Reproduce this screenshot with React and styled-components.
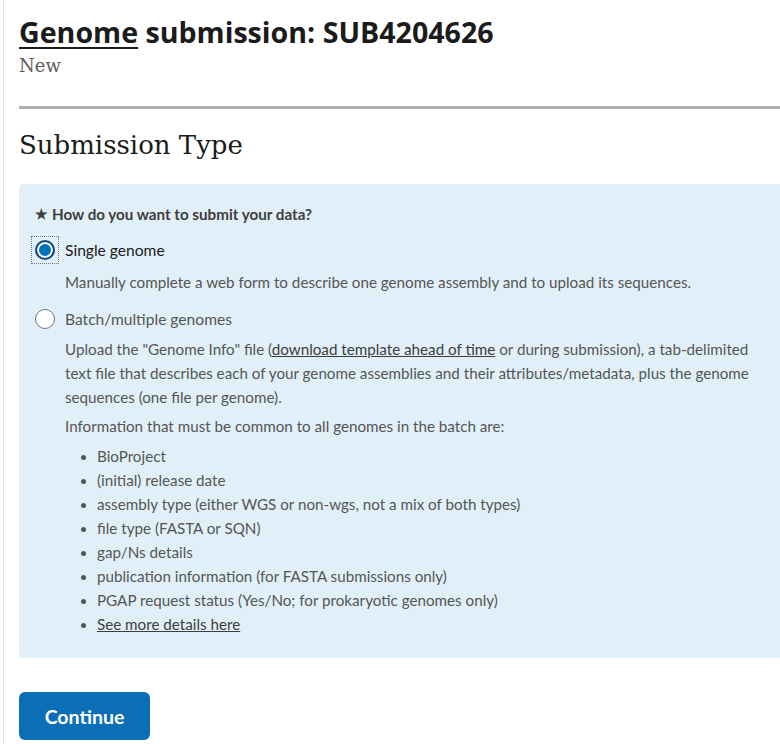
import React, { useState } from "react";
import styled, { createGlobalStyle } from "styled-components";

const GlobalStyle = createGlobalStyle`
  html, body {
    margin: 0;
    padding: 0;
    background: #ffffff;
  }
  body {
    font-family: "Lato", "Noto Sans", sans-serif;
    color: #1b1b1b;
    overflow: hidden;
  }
`;

const Page = styled.div`
  margin-left: 3px;
  border-left: 1px solid #e4e4e4;
  padding: 14px 0 4px 15px;
  min-height: 726px;
`;

const Title = styled.h1`
  margin: 0;
  font-family: "Open Sans", "Liberation Sans", sans-serif;
  font-size: 28.6px;
  font-weight: 700;
  line-height: 36px;
  color: #1b1b1b;
`;

const TitleLink = styled.a`
  color: inherit;
  text-decoration: underline;
  text-underline-offset: 4px;
  text-decoration-thickness: 2px;
`;

const Status = styled.div`
  font-family: "DejaVu Serif", "Liberation Serif", serif;
  font-size: 18px;
  color: #5c5c5c;
  line-height: 24px;
  margin-top: 4px;
`;

const Rule = styled.hr`
  margin: 28px 0 0;
  border: 0;
  height: 3px;
  background: #aeaeae;
`;

const SectionTitle = styled.h2`
  margin: 16px 0 0;
  font-family: "DejaVu Serif", "Liberation Serif", serif;
  font-size: 26px;
  font-weight: 400;
  line-height: 40px;
  color: #1b1b1b;
`;

const Panel = styled.div`
  margin-top: 19px;
  background: #e1f0f8;
  border-radius: 4px 0 0 4px;
  padding: 20px 20px 22px 16px;
`;

const Question = styled.div`
  font-size: 15.2px;
  font-weight: 700;
  color: #3d3d3d;
  line-height: 20px;
  display: flex;
  align-items: center;
  gap: 4px;
`;

const Star = styled.span`
  font-size: 14px;
  color: #3d3d3d;
`;

const Option = styled.label`
  display: flex;
  align-items: center;
  gap: 10px;
  margin-top: ${(p) => p.$top}px;
  cursor: pointer;
  font-size: 15.6px;
  color: ${(p) => (p.$checked ? "#1b1b1b" : "#555")};
  line-height: 24px;
`;

const RadioWrap = styled.span`
  display: inline-flex;
  align-items: center;
  justify-content: center;
  width: 28px;
  height: 28px;
  margin-left: -4px;
  margin-right: -4px;
  box-sizing: border-box;
  border: 1px dotted ${(p) => (p.$focus ? "#6f7a85" : "transparent")};
`;

const RadioCircle = styled.span`
  width: 20px;
  height: 20px;
  box-sizing: border-box;
  border-radius: 50%;
  background: ${(p) => (p.$checked ? "#0071bc" : "#fff")};
  border: ${(p) => (p.$checked ? "2px solid #1a4480" : "1px solid #757575")};
  box-shadow: ${(p) => (p.$checked ? "inset 0 0 0 2px #fff" : "none")};
`;

const Body = styled.div`
  padding-left: 30px;
  font-size: 15.2px;
  line-height: 24px;
  color: #555;
  margin-top: ${(p) => p.$top || 0}px;
`;

const Para = styled.p`
  margin: 0 0 ${(p) => p.$gap || 0}px;
`;

const Link = styled.a`
  color: #3d3d3d;
  text-decoration: underline;
`;

const List = styled.ul`
  margin: 6px 0 0;
  padding-left: 32px;
  list-style: disc;
`;

const Item = styled.li`
  line-height: 24px;
  &::marker {
    font-size: 14px;
  }
`;

const Footer = styled.div`
  margin-top: 34px;
`;

const Button = styled.button`
  font-family: "Lato", "Noto Sans", sans-serif;
  font-size: 19.5px;
  font-weight: 700;
  color: #fff;
  background: #0b6fb8;
  border: 0;
  border-radius: 6px;
  width: 131px;
  height: 48px;
  cursor: pointer;
`;

const fields = [
  "BioProject",
  "(initial) release date",
  "assembly type (either WGS or non-wgs, not a mix of both types)",
  "file type (FASTA or SQN)",
  "gap/Ns details",
  "publication information (for FASTA submissions only)",
  "PGAP request status (Yes/No; for prokaryotic genomes only)",
];

function Radio({ checked, focus }) {
  return (
    <RadioWrap $focus={focus}>
      <RadioCircle $checked={checked} />
    </RadioWrap>
  );
}

export default function App() {
  const [mode, setMode] = useState("single");

  return (
    <>
      <GlobalStyle />
      <Page>
        <Title>
          <TitleLink href="#">Genome</TitleLink> submission: SUB4204626
        </Title>
        <Status>New</Status>
        <Rule />
        <SectionTitle>Submission Type</SectionTitle>

        <Panel>
          <Question>
            <Star>★</Star> How do you want to submit your data?
          </Question>

          <Option $top={12} $checked={mode === "single"} onClick={() => setMode("single")}>
            <Radio checked={mode === "single"} focus={mode === "single"} />
            Single genome
          </Option>
          <Body $top={6}>
            <Para>
              Manually complete a web form to describe one genome assembly and to upload its sequences.
            </Para>
          </Body>

          <Option $top={11} $checked={mode === "batch"} onClick={() => setMode("batch")}>
            <Radio checked={mode === "batch"} focus={mode === "batch"} />
            Batch/multiple genomes
          </Option>
          <Body $top={4}>
            <Para $gap={5}>
              Upload the "Genome Info" file (<Link href="#">download template ahead of time</Link> or
              during submission), a tab-delimited text file that describes each of your genome
              assemblies and their attributes/metadata, plus the genome sequences (one file per
              genome).
            </Para>
            <Para>Information that must be common to all genomes in the batch are:</Para>
            <List>
              {fields.map((f) => (
                <Item key={f}>{f}</Item>
              ))}
              <Item>
                <Link href="#">See more details here</Link>
              </Item>
            </List>
          </Body>
        </Panel>

        <Footer>
          <Button>Continue</Button>
        </Footer>
      </Page>
    </>
  );
}
